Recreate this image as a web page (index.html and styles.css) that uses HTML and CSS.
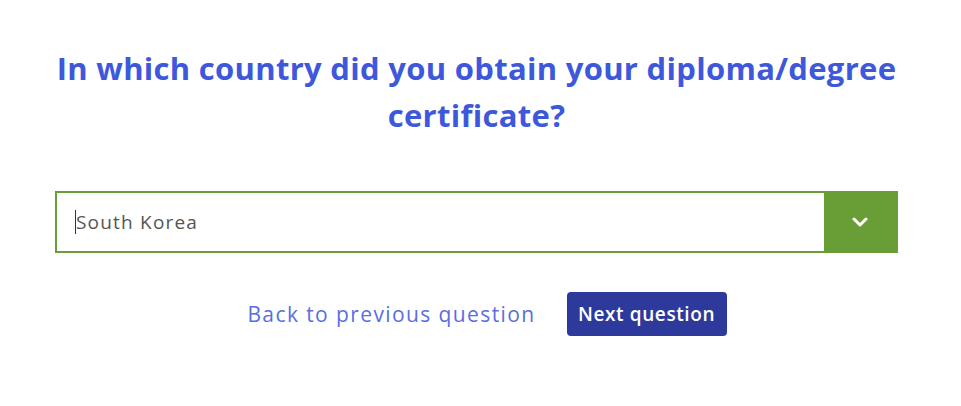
FILE: index.html
```html
<!DOCTYPE html>
<html lang="en">

<head>
    <meta charset="UTF-8">
    <title>Diploma country</title>
    <link rel="stylesheet" href="styles.css">
</head>

<body>
    <div class="question">
        <h1>In which country did you obtain your diploma/degree certificate?</h1>
        <div class="select">
            <span class="value">South Korea</span>
            <span class="arrow">
                <svg width="16" height="10" viewBox="0 0 16 10"><path d="M2 2 L8 8 L14 2" fill="none" stroke="#fff" stroke-width="3" stroke-linecap="round" stroke-linejoin="round"/></svg>
            </span>
        </div>
        <div class="nav">
            <a href="#" class="back">Back to previous question</a>
            <button class="next">Next question</button>
        </div>
    </div>
</body>

</html>
```

FILE: styles.css
```css
* {
    padding: 0;
    margin: 0;
    box-sizing: border-box;
}

body {
    font-family: 'Open Sans', 'Noto Sans', sans-serif;
    background: #fff;
}

.question {
    width: 843px;
    margin-left: 55px;
    padding-top: 45px;
}

h1 {
    text-align: center;
    color: #3e58dc;
    font-size: 31px;
    font-weight: bold;
    letter-spacing: 0.3px;
    line-height: 47px;
}

.select {
    margin-top: 52px;
    height: 62px;
    display: flex;
    border: 2px solid #699d36;
}

.value {
    flex: 1;
    display: flex;
    align-items: center;
    padding-left: 18px;
    font-size: 19px;
    letter-spacing: 1.2px;
    color: #555;
}

.value::before {
    content: "";
    width: 1px;
    height: 24px;
    background: #333;
}

.arrow {
    width: 72px;
    background: #699d36;
    display: flex;
    align-items: center;
    justify-content: center;
}

.nav {
    margin-top: 39px;
    display: flex;
    justify-content: center;
    align-items: center;
    gap: 31px;
    padding-left: 21px;
}

.back {
    color: #5a6ee0;
    font-size: 21px;
    letter-spacing: 1.4px;
    text-decoration: none;
}

.next {
    background: #2d3a9c;
    color: #fff;
    border: none;
    border-radius: 4px;
    font-family: inherit;
    font-size: 19px;
    font-weight: 600;
    letter-spacing: 0.6px;
    height: 44px;
    width: 160px;
}
```
